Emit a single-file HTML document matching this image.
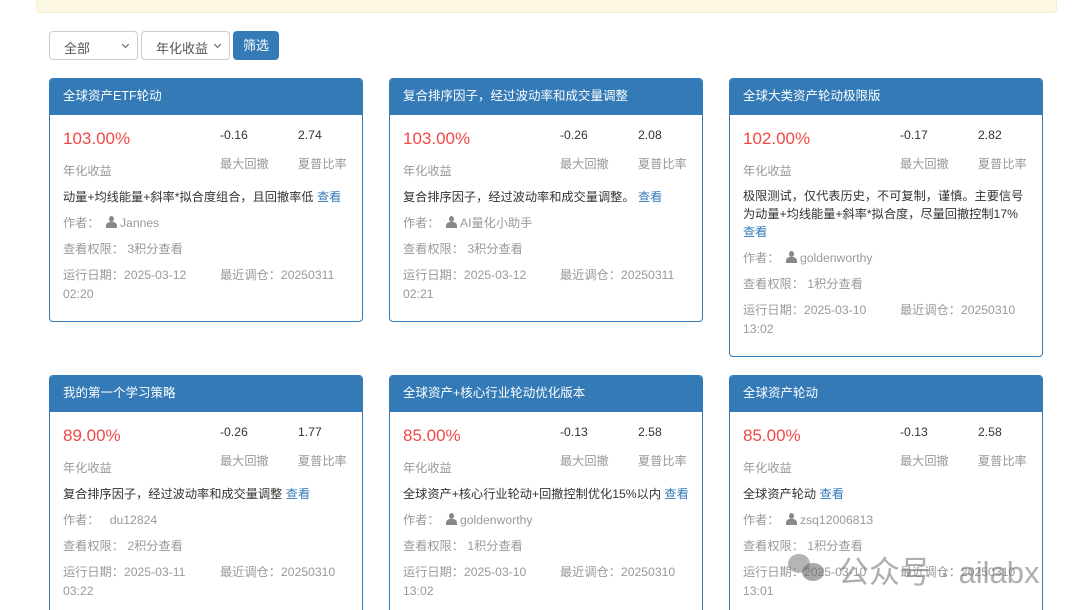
<!DOCTYPE html>
<html><head><meta charset="utf-8"><style>
*{box-sizing:border-box;margin:0;padding:0}
html,body{width:1080px;height:610px;overflow:hidden}
body{background:#fff;font-family:"Liberation Sans","Noto Sans CJK SC",sans-serif;font-size:12.2px;color:#333;position:relative}
.warn{position:absolute;left:36px;top:-5px;width:1021px;height:18px;background:#fcf8e3;border:1px solid #faebcc;border-radius:4px}
.sel{position:absolute;top:31px;height:29px;border:1px solid #ccc;border-radius:4px;background:#fff;font-size:13px;padding:6px 0 0 14px;color:#555}
.sel:after{content:"";position:absolute;right:9px;top:10px;width:4px;height:4px;border-right:1.3px solid #555;border-bottom:1.3px solid #555;transform:rotate(45deg)}
.btn{position:absolute;left:233px;top:31px;width:46px;height:29px;background:#337ab7;border-radius:4px;color:#fff;font-size:13px;text-align:center;line-height:29px}
.card{position:absolute;width:314px;border:1px solid #337ab7;border-radius:4px;overflow:hidden;background:#fff}
.hd{height:36px;background:#337ab7;color:#fff;font-size:12.5px;line-height:35px;padding-left:13px}
.t{position:absolute;white-space:nowrap}
.big{color:#f04848;font-size:17px}
.g{color:#999}
a{color:#337ab7;text-decoration:none}
.u{display:inline-block;width:11px;height:12px;position:relative;vertical-align:-1px;margin:0 3px 0 3px}
.u:before{content:"";position:absolute;left:3px;top:0;width:5px;height:6px;background:#888;border-radius:50%}
.u:after{content:"";position:absolute;left:0;top:6px;width:11px;height:6px;background:#888;border-radius:4px 4px 0 0}
.wm{position:absolute;left:838px;top:547px;font-size:31px;color:rgba(120,120,120,.6);white-space:nowrap}
.wi{position:absolute;left:788px;top:554px;width:22px;height:19px;background:rgba(120,120,120,.55);border-radius:50%}
.wi2{position:absolute;left:802px;top:563px;width:22px;height:18px;background:rgba(110,110,110,.6);border-radius:50%}
</style></head><body>
<div class="warn"></div>
<div class="sel" style="left:49px;width:89px">全部</div>
<div class="sel" style="left:141px;width:89px">年化收益</div>
<div class="btn">筛选</div>

<div class="card" style="left:49px;top:78px;height:244px"><div class="hd">全球资产ETF轮动</div>
<div class="t big" style="left:13px;top:50px">103.00%</div>
<div class="t" style="left:170px;top:49px">-0.16</div><div class="t" style="left:248px;top:49px">2.74</div>
<div class="t g" style="left:13px;top:82px">年化收益</div>
<div class="t g" style="left:170px;top:75px">最大回撤</div><div class="t g" style="left:248px;top:75px">夏普比率</div>
<div class="t" style="left:13px;top:108px">动量+均线能量+斜率*拟合度组合，且回撤率低 <a>查看</a></div>
<div class="t g" style="left:13px;top:134px">作者： <span class="u"></span>Jannes</div>
<div class="t g" style="left:13px;top:160px">查看权限： 3积分查看</div>
<div class="t g" style="left:13px;top:186px">运行日期：2025-03-12<br><span style="line-height:22px">02:20</span></div>
<div class="t g" style="left:170px;top:186px">最近调仓：20250311</div>
</div>

<div class="card" style="left:389px;top:78px;height:244px"><div class="hd">复合排序因子，经过波动率和成交量调整</div>
<div class="t big" style="left:13px;top:50px">103.00%</div>
<div class="t" style="left:170px;top:49px">-0.26</div><div class="t" style="left:248px;top:49px">2.08</div>
<div class="t g" style="left:13px;top:82px">年化收益</div>
<div class="t g" style="left:170px;top:75px">最大回撤</div><div class="t g" style="left:248px;top:75px">夏普比率</div>
<div class="t" style="left:13px;top:108px">复合排序因子，经过波动率和成交量调整。 <a>查看</a></div>
<div class="t g" style="left:13px;top:134px">作者： <span class="u"></span>AI量化小助手</div>
<div class="t g" style="left:13px;top:160px">查看权限： 3积分查看</div>
<div class="t g" style="left:13px;top:186px">运行日期：2025-03-12<br><span style="line-height:22px">02:21</span></div>
<div class="t g" style="left:170px;top:186px">最近调仓：20250311</div>
</div>

<div class="card" style="left:729px;top:78px;height:279px"><div class="hd">全球大类资产轮动极限版</div>
<div class="t big" style="left:13px;top:50px">102.00%</div>
<div class="t" style="left:170px;top:49px">-0.17</div><div class="t" style="left:248px;top:49px">2.82</div>
<div class="t g" style="left:13px;top:82px">年化收益</div>
<div class="t g" style="left:170px;top:75px">最大回撤</div><div class="t g" style="left:248px;top:75px">夏普比率</div>
<div class="t" style="left:13px;top:108px;line-height:18px">极限测试，仅代表历史，不可复制，谨慎。主要信号<br>为动量+均线能量+斜率*拟合度，尽量回撤控制17%<br><a>查看</a></div>
<div class="t g" style="left:13px;top:169px">作者： <span class="u"></span>goldenworthy</div>
<div class="t g" style="left:13px;top:195px">查看权限： 1积分查看</div>
<div class="t g" style="left:13px;top:221px">运行日期：2025-03-10<br><span style="line-height:22px">13:02</span></div>
<div class="t g" style="left:170px;top:221px">最近调仓：20250310</div>
</div>

<div class="card" style="left:49px;top:375px;height:250px"><div class="hd">我的第一个学习策略</div>
<div class="t big" style="left:13px;top:50px">89.00%</div>
<div class="t" style="left:170px;top:49px">-0.26</div><div class="t" style="left:248px;top:49px">1.77</div>
<div class="t g" style="left:13px;top:82px">年化收益</div>
<div class="t g" style="left:170px;top:75px">最大回撤</div><div class="t g" style="left:248px;top:75px">夏普比率</div>
<div class="t" style="left:13px;top:108px">复合排序因子，经过波动率和成交量调整 <a>查看</a></div>
<div class="t g" style="left:13px;top:134px">作者： &nbsp; du12824</div>
<div class="t g" style="left:13px;top:160px">查看权限： 2积分查看</div>
<div class="t g" style="left:13px;top:186px">运行日期：2025-03-11<br><span style="line-height:22px">03:22</span></div>
<div class="t g" style="left:170px;top:186px">最近调仓：20250310</div>
</div>

<div class="card" style="left:389px;top:375px;height:250px"><div class="hd">全球资产+核心行业轮动优化版本</div>
<div class="t big" style="left:13px;top:50px">85.00%</div>
<div class="t" style="left:170px;top:49px">-0.13</div><div class="t" style="left:248px;top:49px">2.58</div>
<div class="t g" style="left:13px;top:82px">年化收益</div>
<div class="t g" style="left:170px;top:75px">最大回撤</div><div class="t g" style="left:248px;top:75px">夏普比率</div>
<div class="t" style="left:13px;top:108px">全球资产+核心行业轮动+回撤控制优化15%以内 <a>查看</a></div>
<div class="t g" style="left:13px;top:134px">作者： <span class="u"></span>goldenworthy</div>
<div class="t g" style="left:13px;top:160px">查看权限： 1积分查看</div>
<div class="t g" style="left:13px;top:186px">运行日期：2025-03-10<br><span style="line-height:22px">13:02</span></div>
<div class="t g" style="left:170px;top:186px">最近调仓：20250310</div>
</div>

<div class="card" style="left:729px;top:375px;height:250px"><div class="hd">全球资产轮动</div>
<div class="t big" style="left:13px;top:50px">85.00%</div>
<div class="t" style="left:170px;top:49px">-0.13</div><div class="t" style="left:248px;top:49px">2.58</div>
<div class="t g" style="left:13px;top:82px">年化收益</div>
<div class="t g" style="left:170px;top:75px">最大回撤</div><div class="t g" style="left:248px;top:75px">夏普比率</div>
<div class="t" style="left:13px;top:108px">全球资产轮动 <a>查看</a></div>
<div class="t g" style="left:13px;top:134px">作者： <span class="u"></span>zsq12006813</div>
<div class="t g" style="left:13px;top:160px">查看权限： 1积分查看</div>
<div class="t g" style="left:13px;top:186px">运行日期：2025-03-10<br><span style="line-height:22px">13:01</span></div>
<div class="t g" style="left:170px;top:186px">最近调仓：20250310</div>
</div>

<div class="wi"></div><div class="wi2"></div>
<div class="wm">公众号 · ailabx</div>
</body></html>
